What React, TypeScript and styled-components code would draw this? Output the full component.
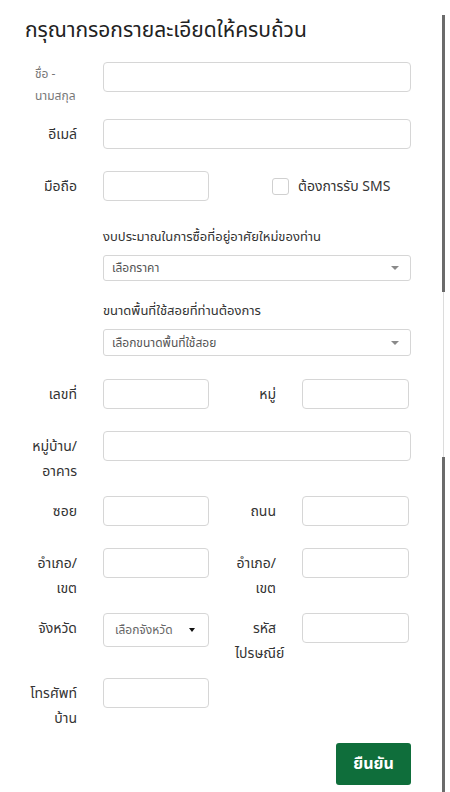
import styled, { createGlobalStyle } from 'styled-components';

const GlobalStyle = createGlobalStyle`
	html, body {
		margin: 0;
		padding: 0;
		background: #fff;
	}

	body {
		font-family: "Noto Sans Thai", "Noto Sans", "Liberation Sans", sans-serif;
		color: #333;
	}

	* {
		box-sizing: border-box;
	}
`;

const Page = styled.div`
	display: flex;
	width: 450px;
	height: 792px;
	overflow: hidden;
`;

const Main = styled.main`
	flex: 1;
	padding: 0 31px 0 25px;
`;

const Title = styled.h1`
	margin: 14px 0 14px;
	font-size: 21px;
	font-weight: 400;
	line-height: 34px;
	color: #222;
`;

const Row = styled.div`
	display: grid;
	grid-template-columns: 52px 1fr;
	column-gap: 26px;
	align-items: start;
	min-height: 40px;
	margin-bottom: 12px;
`;

const PairRow = styled(Row)`
	grid-template-columns: 52px 106px 41px 107px;
`;

const Label = styled.label<{ $light?: boolean }>`
	display: block;
	padding-top: ${(p) => (p.$light ? '1px' : '3px')};
	font-size: ${(p) => (p.$light ? '12px' : '14px')};
	line-height: ${(p) => (p.$light ? '22px' : '25px')};
	color: ${(p) => (p.$light ? '#777' : '#333')};
	text-align: ${(p) => (p.$light ? 'left' : 'right')};
	margin-left: ${(p) => (p.$light ? '10px' : '0')};
	white-space: nowrap;
`;

const Input = styled.input`
	display: block;
	width: 100%;
	height: 30px;
	border: 1px solid #d6d6d6;
	border-radius: 4px;
	background: #fff;
	outline: none;
`;

const Inline = styled.div`
	display: flex;
	align-items: center;
	gap: 63px;
`;

const SmallInput = styled(Input)`
	width: 106px;
`;

const CheckWrap = styled.label`
	display: flex;
	align-items: center;
	gap: 9px;
	font-size: 14px;
	color: #333;
	margin-top: 1px;
`;

const Box = styled.span`
	width: 17px;
	height: 17px;
	border: 1px solid #d0d0d0;
	border-radius: 3px;
	background: #fff;
`;

const Block = styled.div`
	margin: 16px 0 23px 78px;
`;

const BlockLabel = styled.div`
	font-size: 13px;
	line-height: 20px;
	color: #333;
	margin-bottom: 8px;
`;

const Select = styled.div<{ $gap?: number; $h?: number }>`
	position: relative;
	display: flex;
	align-items: center;
	height: ${(p) => p.$h ?? 26}px;
	padding: 0 8px;
	border: 1px solid #d6d6d6;
	border-radius: 3px;
	font-size: 12px;
	color: #555;
	margin-bottom: ${(p) => p.$gap ?? 0}px;

	&::after {
		content: '';
		position: absolute;
		right: 11px;
		top: 50%;
		margin-top: -2px;
		border-left: 4px solid transparent;
		border-right: 4px solid transparent;
		border-top: 4px solid #8a8a8a;
	}
`;

const ProvinceSelect = styled(Select)`
	height: 34px;
	padding-left: 11px;
	border-radius: 4px;
	color: #666;

	&::after {
		right: 13px;
		border-left-width: 3.5px;
		border-right-width: 3.5px;
		border-top: 4px solid #111;
	}
`;

const Footer = styled.div`
	display: flex;
	justify-content: flex-end;
`;

const Submit = styled.button`
	width: 75px;
	height: 42px;
	border: none;
	border-radius: 3px;
	background: #0f6e3b;
	color: #fff;
	font-family: inherit;
	font-size: 16px;
	font-weight: 700;
`;

const Rail = styled.div`
	display: flex;
	flex-direction: column;
	align-items: center;
	width: 3px;
	margin-right: 5px;
	padding-top: 15px;
`;

const Thumb = styled.div<{ $h: number }>`
	width: 3px;
	height: ${(p) => p.$h}px;
	background: #6b6b6b;
	flex-shrink: 0;
`;

const Track = styled.div<{ $h: number }>`
	width: 1px;
	height: ${(p) => p.$h}px;
	background: #dcdcdc;
	flex-shrink: 0;
`;

const App = () => {
	return (
		<>
			<GlobalStyle />
			<Page>
				<Main>
					<Title>กรุณากรอกรายละเอียดให้ครบถ้วน</Title>

					<Row>
						<Label $light>
							ชื่อ -<br />
							นามสกุล
						</Label>
						<Input />
					</Row>

					<Row>
						<Label>อีเมล์</Label>
						<Input />
					</Row>

					<Row>
						<Label>มือถือ</Label>
						<Inline>
							<SmallInput />
							<CheckWrap>
								<Box />
								ต้องการรับ SMS
							</CheckWrap>
						</Inline>
					</Row>

					<Block>
						<BlockLabel>งบประมาณในการซื้อที่อยู่อาศัยใหม่ของท่าน</BlockLabel>
						<Select $gap={20}>เลือกราคา</Select>
						<BlockLabel>ขนาดพื้นที่ใช้สอยที่ท่านต้องการ</BlockLabel>
						<Select $h={27}>เลือกขนาดพื้นที่ใช้สอย</Select>
					</Block>

					<PairRow>
						<Label>เลขที่</Label>
						<Input />
						<Label>หมู่</Label>
						<Input />
					</PairRow>

					<Row>
						<Label>
							หมู่บ้าน/<br />
							อาคาร
						</Label>
						<Input />
					</Row>

					<PairRow>
						<Label>ซอย</Label>
						<Input />
						<Label>ถนน</Label>
						<Input />
					</PairRow>

					<PairRow>
						<Label>
							อำเภอ/<br />
							เขต
						</Label>
						<Input />
						<Label>
							อำเภอ/<br />
							เขต
						</Label>
						<Input />
					</PairRow>

					<PairRow>
						<Label>จังหวัด</Label>
						<ProvinceSelect>เลือกจังหวัด</ProvinceSelect>
						<Label>
							รหัส<br />
							ไปรษณีย์
						</Label>
						<Input />
					</PairRow>

					<PairRow>
						<Label>
							โทรศัพท์<br />
							บ้าน
						</Label>
						<Input />
					</PairRow>

					<Footer>
						<Submit>ยืนยัน</Submit>
					</Footer>
				</Main>

				<Rail>
					<Thumb $h={277} />
					<Track $h={165} />
					<Thumb $h={340} />
				</Rail>
			</Page>
		</>
	);
};

export default App;
